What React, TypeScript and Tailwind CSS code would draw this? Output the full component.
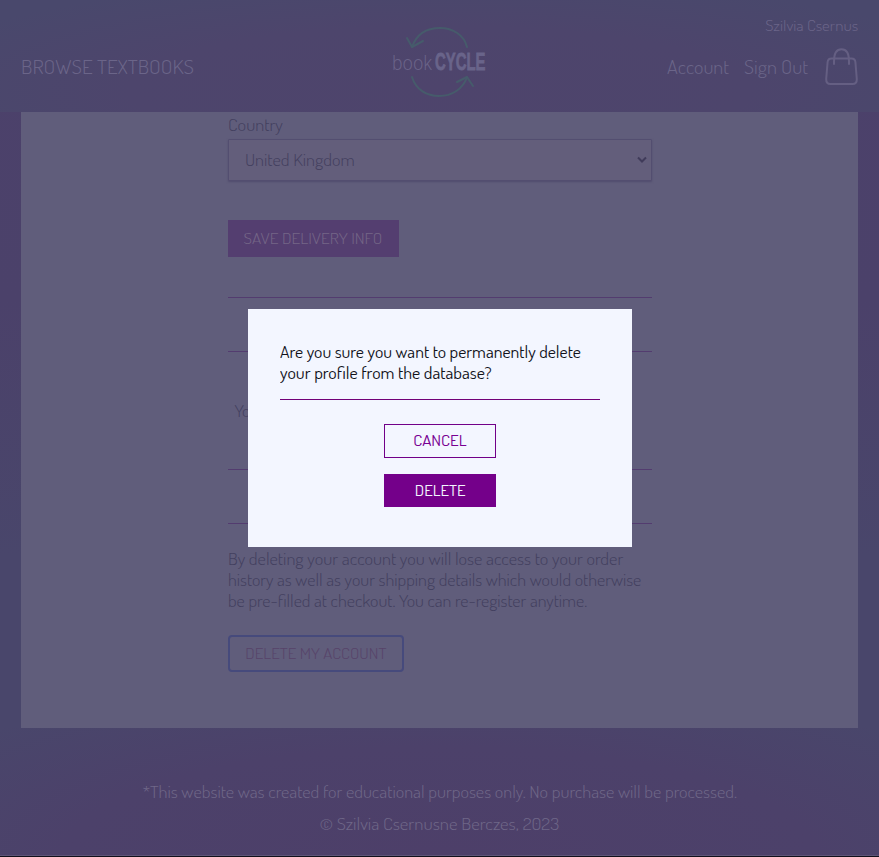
import React from "react";

function Logo() {
  return (
    <svg width="110" height="84" viewBox="0 0 110 84" fill="none" className="h-[84px] w-[110px] overflow-visible">
      <g stroke="#465b6b" strokeWidth="2" strokeLinecap="round" strokeLinejoin="round">
        <path d="M27 27C32 13 43 8 55 8C68 8 79 15 82 27" />
        <path d="M22 18L27 27L38 21" />
        <path d="M27 57C31 70 42 76 54 76C67 76 78 69 82 57" />
        <path d="M72 62L82 57L88 66" />
      </g>
      <text x="7" y="50" fill="#6a6388" fontSize="20" fontFamily="'Noto Sans', sans-serif" fontWeight="300" textLength="40" lengthAdjust="spacingAndGlyphs">book</text>
      <text transform="translate(50 50) scale(0.62 1)" fill="#69648a" stroke="#69648a" strokeWidth="0.8" fontSize="24" fontFamily="'Liberation Sans', sans-serif" fontWeight="700">CYCLE</text>
    </svg>
  );
}

function Bag() {
  return (
    <svg width="33" height="38" viewBox="0 0 33 38" fill="none" stroke="#655f83" strokeWidth="2" strokeLinecap="round" className="h-[38px] w-[33px]">
      <path d="M6.5 10.5H26.5Q30 10.5 30.4 14L31.8 31Q32 36 27.5 36H5.5Q1 36 1.2 31L2.6 14Q3 10.5 6.5 10.5Z" />
      <path d="M9 16V13C9 5 12 1.2 16.5 1.2S24 5 24 13V16" />
    </svg>
  );
}

function Rules() {
  return (
    <div className="flex h-[55px] w-full flex-col justify-between">
      <div className="h-px w-full bg-[#533c6f]" />
      <div className="h-px w-full bg-[#533c6f]" />
    </div>
  );
}

export default function App() {
  return (
    <div className="relative flex h-[857px] w-[879px] flex-col overflow-hidden border-b border-[#11101c] bg-[#4b416a] bg-[linear-gradient(180deg,#4c416b_0%,#4b416a_35%,#49466b_65%,#49466b_100%)] font-['Dosis','Lato',sans-serif] font-light text-[#43405f]">
      <header className="flex h-28 shrink-0 items-center justify-between bg-[radial-gradient(ellipse_at_50%_80%,#4e446c_0%,#4d456c_50%,#49486c_90%)] px-[21px] text-[#6b6589]">
        <div className="mt-[21px] w-[240px] text-lg leading-6 whitespace-nowrap">
          <a className="inline-block origin-left scale-x-[1.19]">BROWSE TEXTBOOKS</a>
        </div>
        <div className="mt-3 flex w-[110px] justify-center"><Logo /></div>
        <div className="flex w-[240px] flex-col items-end self-start pt-4">
          <span className="origin-right scale-x-[1.13] text-[15px] leading-5">Szilvia Csernus</span>
          <nav className="mt-3 flex items-center gap-4 text-lg leading-6 whitespace-nowrap">
            <div className="w-[61px]"><a className="inline-block origin-left scale-x-[1.13]">Account</a></div>
            <div className="w-[65px]"><a className="inline-block origin-left scale-x-[1.14]">Sign Out</a></div>
            <Bag />
          </nav>
        </div>
      </header>

      <main className="mx-[21px] flex h-[616px] shrink-0 justify-center bg-[#605d7b]">
        <div className="flex w-[424px] flex-col items-start">
          <label className="mt-[2px] h-[25px] origin-left scale-x-[1.09] text-[17px] leading-[21px]">Country</label>
          <div className="flex h-[42px] w-full items-center justify-between rounded-[1px] border border-[#534e70] bg-[#635e7b] pr-[3px] pl-4 shadow-[0_1px_2px_#514c6e]">
            <span className="origin-left scale-x-[1.083] text-[17px]">United Kingdom</span>
            <svg width="12" height="8" viewBox="0 0 12 8" fill="none" stroke="#403b5a" strokeWidth="2"><path d="M2 1.5L6 5.5L10 1.5" /></svg>
          </div>
          <button className="mt-[39px] flex h-[37px] w-[171px] items-center justify-center bg-[#543e70] text-sm font-light whitespace-nowrap text-[#756687]">
            <span className="scale-x-[1.24]">SAVE DELIVERY INFO</span>
          </button>
          <div className="mt-10 w-full"><Rules /></div>
          <p className="h-[117px] origin-left scale-x-[1.07] pt-12 pl-[6px] text-[17px] leading-[21px]">You have no orders yet.</p>
          <Rules />
          <div className="mt-6 flex flex-col items-start text-[17px] leading-[21px] whitespace-nowrap">
            <p className="origin-left scale-x-[1.083]">By deleting your account you will lose access to your order</p>
            <p className="origin-left scale-x-[1.066]">history as well as your shipping details which would otherwise</p>
            <p className="origin-left scale-x-[1.064]">be pre-filled at checkout. You can re-register anytime.</p>
          </div>
          <button className="mt-6 flex h-[37px] w-44 items-center justify-center rounded-[4px] border-2 border-[#464a7c] text-sm font-light whitespace-nowrap text-[#574369]">
            <span className="scale-x-[1.22]">DELETE MY ACCOUNT</span>
          </button>
        </div>
      </main>

      <footer className="flex grow flex-col items-center border-b border-[#5f5678] bg-[radial-gradient(ellipse_at_50%_100%,#4d3f69_0%,#4c416a_60%,#49466b_100%)] pt-[54px] text-[17px] leading-5 text-[#6f6788]">
        <p className="scale-x-[1.078]">*This website was created for educational purposes only. No purchase will be processed.</p>
        <p className="mt-3 scale-x-[1.107]">© Szilvia Csernusne Berczes, 2023</p>
      </footer>

      <section role="dialog" className="absolute top-[309px] left-[248px] flex h-[238px] w-96 flex-col items-center bg-[#f3f6ff] px-8 pt-8 font-normal">
        <div className="flex h-[58px] w-full flex-col items-start text-[17px] leading-[21px] whitespace-nowrap text-[#11121a]">
          <p className="origin-left scale-x-[1.042]">Are you sure you want to permanently delete</p>
          <p className="origin-left scale-x-[1.05]">your profile from the database?</p>
        </div>
        <div className="h-px w-full bg-[#710077]" />
        <button className="mt-6 flex h-[34px] w-28 items-center justify-center border border-[#710088] text-sm text-[#780092]">
          <span className="scale-x-[1.22]">CANCEL</span>
        </button>
        <button className="mt-4 flex h-[33px] w-28 items-center justify-center bg-[#74008a] text-sm text-[#f3f6ff]">
          <span className="scale-x-[1.2]">DELETE</span>
        </button>
      </section>
    </div>
  );
}
